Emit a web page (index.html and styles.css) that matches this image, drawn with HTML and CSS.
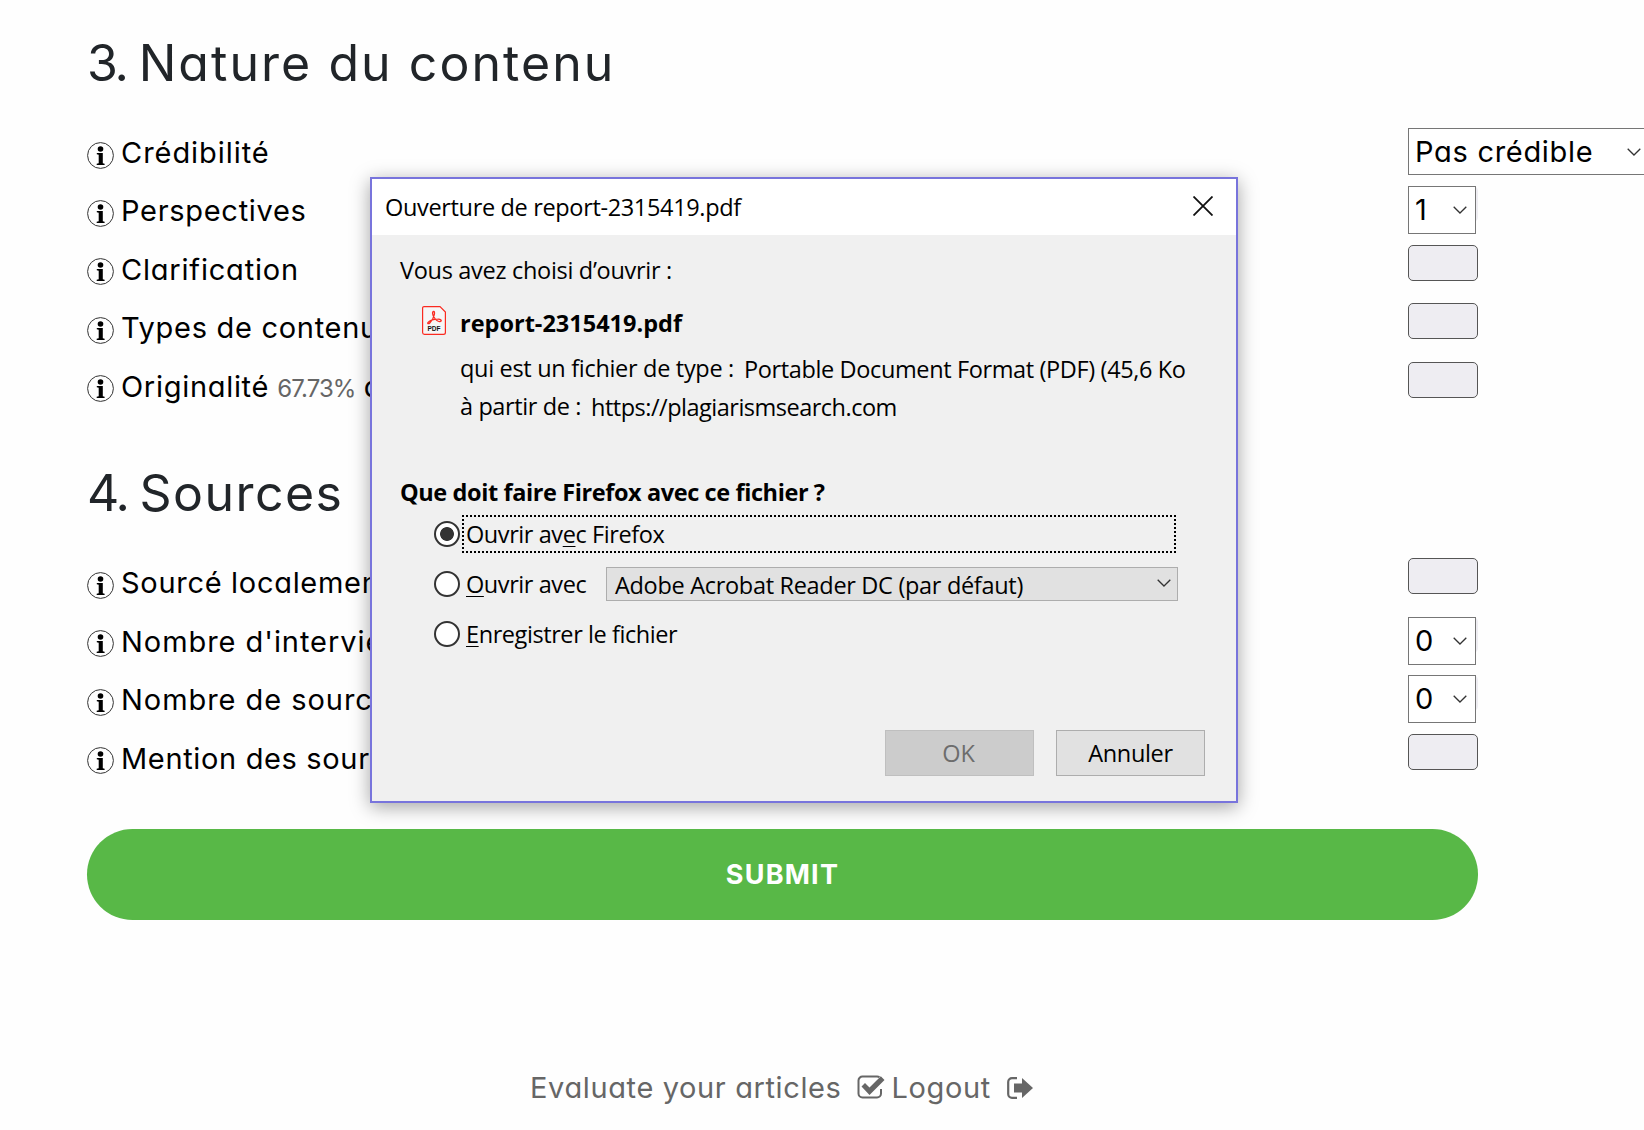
FILE: index.html
```
<!DOCTYPE html>
<html lang="fr">
<head>
<meta charset="utf-8">
<title>Nature du contenu</title>
<link rel="stylesheet" href="styles.css">
</head>
<body>
<main class="page">
  <section class="group">
    <h2 class="heading"><span class="num">3. </span><span class="t-nature">Nature du contenu</span></h2>
    <div class="row"><svg class="info" viewBox="0 0 27 27"><use href="#info"/></svg><span class="label"><span class="t-cred">Crédibilité</span></span><span class="select wide"><span class="t-pas">Pas crédible</span><svg class="chev" viewBox="0 0 14 8"><use href="#chev"/></svg></span></div>
    <div class="row"><svg class="info" viewBox="0 0 27 27"><use href="#info"/></svg><span class="label"><span class="t-persp">Perspectives</span></span><span class="under"><span class="select">1<svg class="chev" viewBox="0 0 14 8"><use href="#chev"/></svg></span></span></div>
    <div class="row"><svg class="info" viewBox="0 0 27 27"><use href="#info"/></svg><span class="label"><span class="t-clar">Clarification</span></span><span class="box"></span></div>
    <div class="row"><svg class="info" viewBox="0 0 27 27"><use href="#info"/></svg><span class="label"><span class="t-types">Types de contenu</span></span><span class="box"></span></div>
    <div class="row"><svg class="info" viewBox="0 0 27 27"><use href="#info"/></svg><span class="label"><span class="t-orig">Originalité</span> <small class="pct">67.73%</small> de</span><span class="box"></span></div>
  </section>
  <section class="group">
    <h2 class="heading"><span class="num">4. </span><span class="t-sources">Sources</span></h2>
    <div class="row"><svg class="info" viewBox="0 0 27 27"><use href="#info"/></svg><span class="label t-src">Sourcé localement</span><span class="box"></span></div>
    <div class="row"><svg class="info" viewBox="0 0 27 27"><use href="#info"/></svg><span class="label t-nom">Nombre d'interviews</span><span class="under"><span class="select">0<svg class="chev" viewBox="0 0 14 8"><use href="#chev"/></svg></span></span></div>
    <div class="row"><svg class="info" viewBox="0 0 27 27"><use href="#info"/></svg><span class="label t-nom">Nombre de sources</span><span class="under"><span class="select">0<svg class="chev" viewBox="0 0 14 8"><use href="#chev"/></svg></span></span></div>
    <div class="row"><svg class="info" viewBox="0 0 27 27"><use href="#info"/></svg><span class="label t-mention">Mention des sources</span><span class="box"></span></div>
  </section>
  <button class="submit">SUBMIT</button>
  <footer class="footer">
    <a class="link"><span>Evaluate your articles</span><svg class="ico check" viewBox="0 0 28 24"><path d="M24 14v4.500a4 4 0 0 1-4 4H5.500a4 4 0 0 1-4-4V5.500a4 4 0 0 1 4-4H20q1.500 0 2.500.6" fill="none" stroke="currentColor" stroke-width="2"/><path d="M4.500 11.500l3.500-3.500 4.500 4.500L23.800 1.200l3.700 3.700L12.500 20z" fill="currentColor"/></svg></a>
    <a class="link"><span>Logout</span><svg class="ico out" viewBox="0 0 26 22"><path d="M10 1.200H5a3.800 3.800 0 0 0-3.800 3.800v12A3.800 3.800 0 0 0 5 20.800h5" fill="none" stroke="currentColor" stroke-width="2.200"/><path d="M7 6.500h8V1l11 10-11 10v-5.500H7z" fill="currentColor"/></svg></a>
  </footer>
</main>

<div class="dialog">
  <div class="titlebar"><span class="t-title">Ouverture de report-2315419.pdf</span><svg class="close" viewBox="0 0 20 20"><path d="M.5.5l19 19M19.500.5l-19 19" stroke="#111" stroke-width="1.800"/></svg></div>
  <div class="content">
    <p class="line"><span class="t-vous">Vous avez choisi d’ouvrir :</span></p>
    <div class="file">
      <svg class="pdf" viewBox="0 0 24 29"><path d="M2 .6h16l5.400 5.400v20.500a1.900 1.900 0 0 1-1.900 1.900H2.500A1.900 1.900 0 0 1 .6 26.500V2A1.400 1.400 0 0 1 2 .6z" fill="#f6f6f6" stroke="#fa2a20" stroke-width="1.200"/><path d="M11.700 5.500c-2 0-1 4 .5 6 1.500 2.200 4 4.500 6 4 2.300-.8.500-2.500-2.500-2.300-3.500.1-7.500 1.300-9.200 2.800-1.800 1.500-.2 2.500 1.500.7 2-2 3.700-5 4.300-8 .4-1.900.2-3.200-.6-3.200z" fill="none" stroke="#fa2a20" stroke-width="1.300"/><text x="12" y="25.200" class="pdf-text">PDF</text></svg>
      <strong class="name">report-2315419.pdf</strong>
    </div>
    <p class="line meta"><span class="t-qui">qui est un fichier de type :</span><span class="val t-port">Portable Document Format (PDF) (45,6 Ko</span></p>
    <p class="line meta"><span class="t-part">à partir de :</span><span class="val t-http">https://plagiarismsearch.com</span></p>
    <p class="line question"><strong class="t-que">Que doit faire Firefox avec ce fichier ?</strong></p>
    <div class="opt"><i class="radio on"></i><span class="focus">Ouvrir av<u>e</u>c Firefox</span></div>
    <div class="opt"><i class="radio"></i><span class="olabel"><u>O</u>uvrir avec</span><span class="combo"><span class="t-adobe">Adobe Acrobat Reader DC (par défaut)</span><svg class="chev" viewBox="0 0 14 8"><use href="#chev"/></svg></span></div>
    <div class="opt"><i class="radio"></i><span class="olabel"><u>E</u>nregistrer le fichier</span></div>
    <div class="actions"><button class="btn off">OK</button><button class="btn">Annuler</button></div>
  </div>
</div>

<svg class="defs" width="0" height="0">
  <symbol id="info" viewBox="0 0 27 27"><circle cx="13.500" cy="13.500" r="12.900" fill="none" stroke="#333" stroke-width="1"/><circle cx="13.500" cy="7" r="2.800"/><path d="M9.800 11h6v10.300l1.800.5v1.200H9.700v-1.200l2-.5v-8.600l-1.900-.4z"/></symbol>
  <symbol id="chev" viewBox="0 0 14 8"><path d="M.7.7L7 7 13.300.7" fill="none" stroke="#333" stroke-width="1.300"/></symbol>
</svg>
</body>
</html>
```
FILE: styles.css
```
* { box-sizing: border-box; }
body { margin: 0; width: 1644px; height: 1130px; overflow: hidden; position: relative; background: #fefefe; color: #000; font-family: Inter, "Liberation Sans", sans-serif; font-feature-settings: "cv11"; }

/* Form page */
.page { display: flex; flex-direction: column; padding: 0 0 0 87px; height: 1130px; overflow: hidden; }
.group { display: flex; flex-direction: column; flex: none; height: 430.200px; }
.heading { margin: 0; height: 128px; padding-top: 31px; font-size: 50px; line-height: 64px; font-weight: 400; color: #212529; white-space: pre; }
.num { letter-spacing: -2.200px; }
.row { display: grid; grid-template-columns: 34px 1287px auto; height: 58.450px; flex: none; align-items: start; justify-content: start; font-size: 29px; line-height: 48px; white-space: nowrap; }
.info { width: 27px; height: 27px; margin-top: 13.500px; display: block; }
.label { white-space: pre; padding-top: 1px; }
.pct { font-size: 24px; color: #666; letter-spacing: -.9px; }
.select { display: flex; align-items: center; justify-content: space-between; width: 68px; height: 48px; padding: 0 8px 0 6px; border: 1px solid #767676; background: #fff; }
.select.wide { width: 242px; height: 47px; }
.under { width: 70px; height: 36px; border-radius: 5px; background: #eeedf2; }
.chev { width: 14px; height: 8px; flex: none; }
.box { width: 70px; height: 36px; border: 1px solid #555; border-radius: 5px; background: #eeedf2; }
.submit { flex: none; width: 1391px; height: 91px; margin-top: -31.400px; padding: 0; border: 0; border-radius: 46px; background: #58b847; color: #fff; font: 700 27px/91px Inter, sans-serif; letter-spacing: 1.200px; }
.footer { display: flex; width: 1391px; margin-top: 144px; padding-left: 443px; font-size: 29px; line-height: 48px; color: #666; white-space: nowrap; letter-spacing: .62px; }
.link { display: flex; align-items: center; }
.ico { flex: none; }
.check { width: 28px; height: 24px; margin: -2px 7px 0 15px; }
.out { width: 26px; height: 22px; margin-left: 16px; }

.t-nature { letter-spacing: 2.050px; }
.t-sources { letter-spacing: 1.450px; }
.t-cred { letter-spacing: .95px; }
.t-pas, .t-persp, .t-orig { letter-spacing: .7px; }
.t-clar { letter-spacing: .8px; }
.t-types { letter-spacing: .7px; }
.t-src { letter-spacing: .7px; }
.t-nom { letter-spacing: .95px; }
.t-mention { letter-spacing: .65px; }

/* Download dialog */
.dialog { position: absolute; left: 370px; top: 177px; width: 868px; height: 626px; border: 2px solid #7874dc; background: #f0f0f0; box-shadow: 0 4px 18px rgba(0,0,0,.36); font: 23.500px/36px "Open Sans", "Noto Sans", sans-serif; font-feature-settings: normal; white-space: nowrap; }
.titlebar { display: flex; justify-content: space-between; align-items: center; height: 56px; padding: 0 23px 0 13px; background: #fff; }
.close { width: 20px; height: 20px; margin-top: -3px; }
.content { padding: 17px 31px 0 28px; }
.line { margin: 0; height: 36px; display: flex; }
.file { display: flex; align-items: center; height: 55px; padding-left: 22px; margin-top: 7px; }
.pdf { width: 24px; height: 29px; margin: -4px 14px 0 0; }
.pdf-text { font: 700 6.500px "Liberation Sans", sans-serif; text-anchor: middle; fill: #111; }
.name { letter-spacing: 0; }
.meta { padding-left: 60px; height: 38px; }
.val { margin-left: 10px; padding-top: 1px; }
.question { margin-top: 48px; height: 35px; }
.opt { display: flex; align-items: center; height: 50px; padding-left: 34px; letter-spacing: -.42px; }
.radio { flex: none; width: 26px; height: 26px; border: 2px solid #333; border-radius: 50%; background: #fff; }
.radio.on { background: radial-gradient(circle, #333 6.500px, #fff 7.300px); }
.focus { width: 714px; height: 38px; margin-left: 2px; padding-left: 2px; border: 2px dotted #000; line-height: 34px; }
.olabel { margin-left: 6px; }
u { text-decoration-thickness: 1px; text-underline-offset: 3px; }
.combo { display: flex; align-items: center; justify-content: space-between; width: 572px; height: 34px; margin: 0 27px 0 auto; padding: 0 6px 0 8px; border: 1px solid #adadad; background: #e1e1e1; }
.combo > span { padding-top: 2px; }
.combo .chev { margin-top: -3px; }
.actions { display: flex; justify-content: flex-end; gap: 22px; margin-top: 71px; }
.btn { width: 149px; height: 46px; padding: 0; border: 1px solid #adadad; background: #e1e1e1; color: #000; font: inherit; letter-spacing: -.35px; }
.btn.off { border-color: #bfbfbf; background: #ccc; color: #6d6d6d; padding-right: 2px; letter-spacing: 0; }
.defs { position: absolute; }

.t-title { letter-spacing: -.34px; }
.t-vous { letter-spacing: -.3px; }
.t-qui { letter-spacing: -.31px; }
.t-port { letter-spacing: -.37px; }
.t-part { letter-spacing: -.39px; }
.t-http { letter-spacing: -.5px; }
.t-que { letter-spacing: -.4px; }
.t-adobe { letter-spacing: -.31px; }
```
